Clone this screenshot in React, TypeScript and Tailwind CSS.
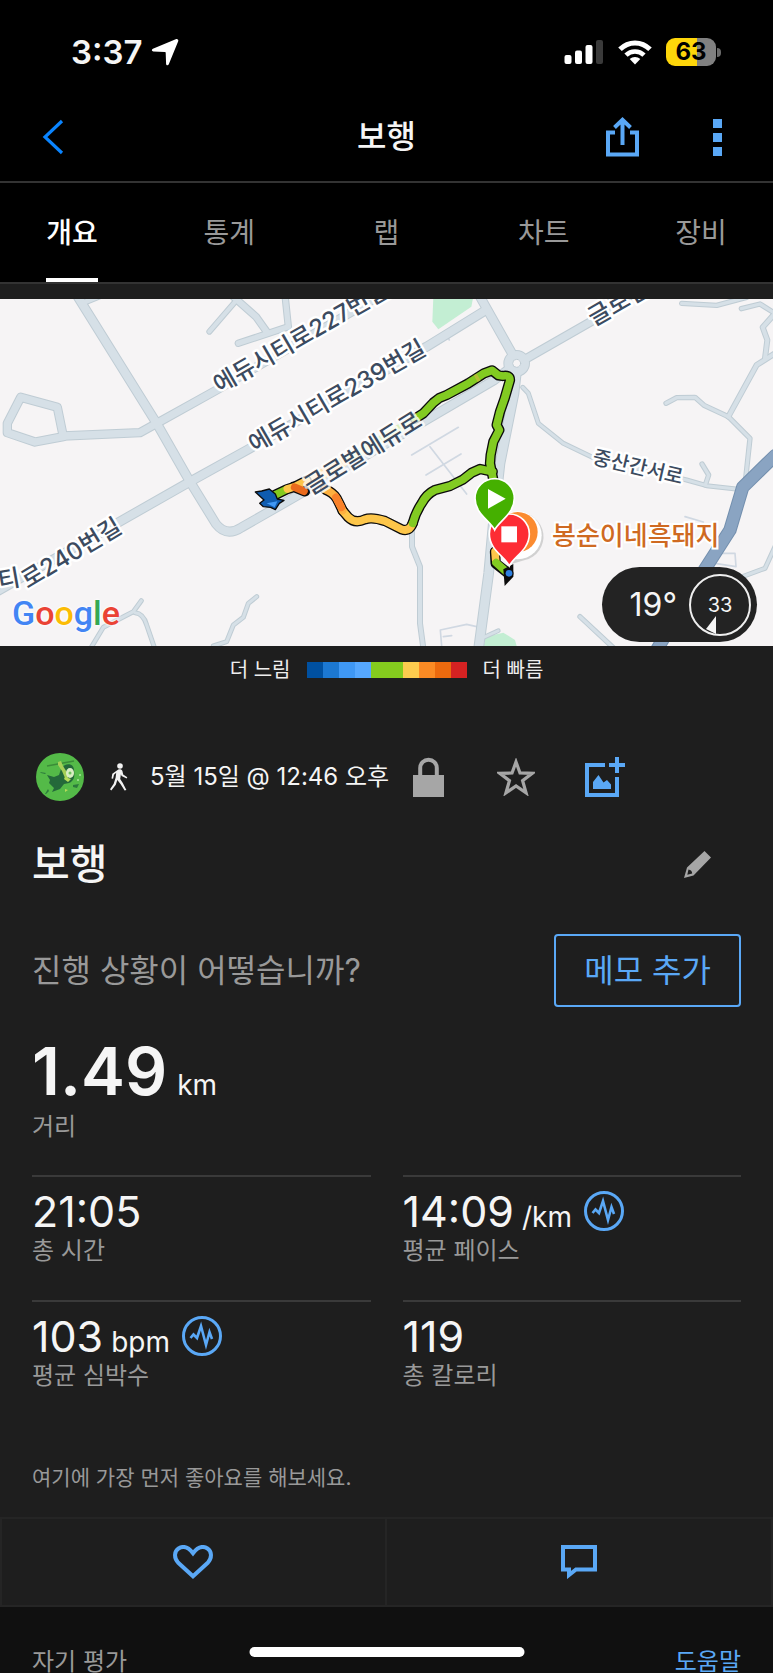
import React, { useState } from "react";

const TABS = ["개요", "통계", "랩", "차트", "장비"];

const PACE_COLORS = [
  "bg-[#0050a0]",
  "bg-[#1c78d2]",
  "bg-[#3f98f5]",
  "bg-[#56a8ff]",
  "bg-[#84cb1e]",
  "bg-[#84cb1e]",
  "bg-[#fccb4e]",
  "bg-[#fb8b24]",
  "bg-[#ec6a0e]",
  "bg-[#d62222]",
];

const STATS = [
  { value: "21:05", unit: "", label: "총 시간", chart: false },
  { value: "14:09", unit: "/km", label: "평균 페이스", chart: true },
  { value: "103", unit: "bpm", label: "평균 심박수", chart: true },
  { value: "119", unit: "", label: "총 칼로리", chart: false },
];

// Map geometry is drawn on a 3x grid and scaled down
const ROADS = [
  { d: "M230 15 L470 400 L570 575 L648 702 Q680 742 725 712 L900 612 L1480 272 L1550 220", w: 24 },
  { d: "M245 40 L300 18", w: 14 },
  { d: "M190 438 L420 428 L470 400 L650 300 L1160 5", w: 22 },
  { d: "M62 322 L172 352 L190 440 L105 456 L22 428 L22 400 Z", w: 22 },
  { d: "M-10 905 L570 575 L745 478 L1280 170 L1450 65", w: 24 },
  { d: "M628 125 L710 30", w: 12 },
  { d: "M715 160 L865 110 L855 15", w: 16 },
  { d: "M700 20 L768 80 L800 125", w: 18 },
  { d: "M1440 20 L1550 215", w: 24 },
  { d: "M1575 208 L1790 85 L1900 10", w: 22 },
  { d: "M1550 240 L1542 310 L1500 520 L1480 700 L1466 850 L1436 1075", w: 26 },
  { d: "M1568 292 L1585 310 L1615 400 L1690 460 L1780 503 L2060 570 L2120 587 L2215 598", w: 9 },
  { d: "M2106 522 L2126 555 L2116 585", w: 10 },
  { d: "M1998 340 L2030 323 L2085 322 L2112 346 L2185 380 L2250 445 L2236 575", w: 10 },
  { d: "M2185 380 L2270 225 L2325 190", w: 12 },
  { d: "M2295 205 L2302 150 L2288 112 L2325 70", w: 12 },
  { d: "M2045 40 L2150 46 L2240 22", w: 10 },
  { d: "M2224 56 L2280 42 L2325 70", w: 10 },
  { d: "M1236 725 L1236 770 L1260 830 L1260 1000 L1270 1075", w: 12 },
  { d: "M1740 980 L1842 1075", w: 10 },
  { d: "M1445 1045 L1495 1022", w: 8 },
  { d: "M2200 870 L2295 835 L2325 770", w: 9 },
  { d: "M272 1075 L310 1012 L400 965 L424 932", w: 9 },
  { d: "M405 968 Q430 970 440 1005 L464 1075", w: 9 },
  { d: "M640 1068 L680 1055 L700 1005 L730 982 L745 940 L770 920", w: 9 },
];

const LANES = [
  "M1235 495 L1375 412",
  "M1278 555 L1383 492",
  "M1290 470 L1400 612",
  "M1325 1068 L1321 1020 L1400 1003 L1430 1010",
  "M1330 1040 L1355 1037",
  "M2055 680 L2110 696",
  "M2160 790 L2205 790 L2208 830 L2145 820",
  "M1340 135 L1348 150",
];

const GREEN_LOOP =
  "M1480 570 L1470 520 L1472 495 L1480 455 L1498 420 L1490 405 L1500 365 L1514 325 L1530 270 Q1530 254 1508 258 L1495 256 L1476 241 L1452 250 L1405 280 L1340 315 L1318 324 L1300 338 L1270 370 L1245 386";
const GREEN_BACK = "M1478 545 L1440 537 L1415 548 L1390 568 L1350 588 L1305 600 Q1280 612 1265 640 Q1248 665 1238 700";
const YELLOW_PART = "M1238 700 Q1228 726 1205 718 L1155 693 Q1115 680 1095 688 Q1065 702 1045 682 L1028 662";
const ORANGE_PART = "M1028 662 Q1018 640 1010 625 Q1000 608 975 598";

function MapDrawing() {
  return (
    <svg
      viewBox="0 0 773 347"
      preserveAspectRatio="xMidYMid slice"
      className="block h-full w-full bg-[#f6f4f5]"
      role="img"
      aria-label="경로 지도"
    >
      <g transform="scale(0.333333) translate(0 -27)" fill="none" strokeLinejoin="round" strokeLinecap="round">
        <path d="M1300 20 H1420 L1414 50 L1315 118 L1297 95 Z" fill="#c3eed3" />
        <path d="M1450 1075 L1456 1040 L1510 1028 L1545 1050 L1552 1075 Z" fill="#c3eed3" />
        {LANES.map((d) => (
          <path key={d} d={d} stroke="#d0d8e2" strokeWidth={5} />
        ))}
        {ROADS.map((r) => (
          <path key={r.d} d={r.d} stroke="#bfccd4" strokeWidth={r.w + 6} />
        ))}
        <circle cx={1550} cy={220} r={25} stroke="#bfccd4" strokeWidth={30} />
        {ROADS.map((r) => (
          <path key={r.d} d={r.d} stroke="#d6e0e7" strokeWidth={r.w} />
        ))}
        <circle cx={1550} cy={220} r={24} stroke="#d6e0e7" strokeWidth={26} />
        <circle cx={1550} cy={220} r={12} fill="#f6f4f5" stroke="#bfccd4" strokeWidth={3} />
        <path d="M2325 497 L2228 592 L2190 720 L2110 845 L1970 1080" stroke="#738fae" strokeWidth={40} />
        <path d="M2325 497 L2228 592 L2190 720 L2110 845 L1970 1080" stroke="#8aa4c2" strokeWidth={34} />

        {/* Recorded track */}
        <path d="M1245 388 L1050 505" stroke="#dcefbd" strokeWidth={26} />
        <path d="M1030 515 L920 580" stroke="#fde3b4" strokeWidth={30} />
        <g stroke="#0b0b0b" strokeWidth={31}>
          <path d={GREEN_LOOP} />
          <path d={GREEN_BACK} />
          <path d={YELLOW_PART} />
          <path d={ORANGE_PART} />
          <path d="M825 615 L860 598 L885 590 L920 572 M880 590 L915 604" />
          <path d="M1485 785 L1487 820 L1525 850" />
        </g>
        <g strokeWidth={23}>
          <path d={YELLOW_PART} stroke="#fdc64a" />
          <path d={ORANGE_PART} stroke="#fdb040" />
          <path d="M1024 652 L1008 622" stroke="#f9812a" />
          <path d={GREEN_LOOP} stroke="#82cb22" />
          <path d={GREEN_BACK} stroke="#82cb22" />
          <path d="M1427 266 L1436 261" stroke="#b5bd35" strokeLinecap="butt" />
          <path d="M825 615 L860 598" stroke="#84cb1e" />
          <path d="M862 597 L885 590 L920 572" stroke="#fdc64a" />
          <path d="M884 592 L912 604" stroke="#ea6a1c" />
          <path d="M1485 785 L1487 810" stroke="#fdc64a" />
          <path d="M1488 818 L1520 846" stroke="#82cb22" />
        </g>
        <path d="M1510 838 L1540 822 V860 L1514 888 Z" fill="#0b0b0b" />
        <circle cx={1527} cy={850} r={10} fill="#2f80e0" />
        <path
          d="M766 606 L785 603 L808 597 L826 612 L832 627 L852 631 L838 640 L826 659 L812 652 L790 650 L779 640 L792 630 Z"
          fill="#0f5cb0"
          stroke="#0b0b0b"
          strokeWidth={4}
        />
        <path d="M800 640 L832 634 L824 652 Z" fill="#3f98f5" />
      </g>

      <g
        className="font-[Inter,'Noto_Sans_CJK_KR',sans-serif] text-[24px] font-medium"
        fill="#3c4b60"
        stroke="#ffffff"
        strokeWidth={5}
        strokeLinejoin="round"
        paintOrder="stroke"
        textAnchor="middle"
        dominantBaseline="central"
      >
        <text transform="translate(301 38) rotate(-30)">에듀시티로227번길</text>
        <text transform="translate(337 97) rotate(-30)">에듀시티로239번길</text>
        <text transform="translate(363 154) rotate(-32)" strokeOpacity={0.8}>글로벌에듀로</text>
        <text transform="translate(647 -13) rotate(-30)">글로벌에듀로</text>
        <text transform="translate(9 280) rotate(-10)">티</text>
        <text transform="translate(71 254) rotate(-31)">로240번길</text>
        <text transform="translate(638 168) rotate(13)" className="text-[20px]">중산간서로</text>
      </g>

      <g transform="scale(0.333333) translate(0 -27)">
        <path d="M1555 668 a72 72 0 0 1 20 142 L1535 822 Z" fill="#b9b9b9" opacity={0.6} />
        <circle cx={1553} cy={736} r={72} fill="#ffffff" />
        <circle cx={1553} cy={726} r={60} fill="#fb8b30" />
        <path
          d="M1528 828 C1515 800 1468 780 1468 732 a60 60 0 0 1 120 0 C1588 780 1541 800 1528 828 Z"
          fill="#fd2c34"
          stroke="#ffffff"
          strokeWidth={5}
        />
        <rect x={1504} y={709} width={47} height={48} fill="#ffffff" />
        <path
          d="M1484 720 C1472 694 1425 672 1425 625 a59 59 0 0 1 118 0 C1543 672 1496 694 1484 720 Z"
          fill="#45b000"
          stroke="#ffffff"
          strokeWidth={5}
        />
        <path d="M1464 597 L1517 626 L1464 656 Z" fill="#ffffff" />
      </g>
      <text
        x={552}
        y={246}
        className="font-['Noto_Sans_CJK_KR',sans-serif] text-[26px] font-medium"
        fill="#cf6a22"
        stroke="#ffffff"
        strokeWidth={4}
        paintOrder="stroke"
      >
        봉순이네흑돼지
      </text>
    </svg>
  );
}

function StatusBar() {
  return (
    <div className="flex h-[93px] items-center justify-between bg-black pt-[11px] pr-[52px] pl-[71px]">
      <div className="flex items-center gap-2">
        <span className="text-[33px] leading-none font-semibold">3:37</span>
        <svg viewBox="0 0 28 28" className="h-7 w-7" fill="#fff">
          <path d="M26.6 1.4c.8.4.9 1 .5 2L17.800 26.200c-.7 1.600-2.500 1.400-2.700-.3l-.4-10.800c0-.8-.3-1.100-1-1.100L2.300 13.500c-1.700-.1-2-1.900-.4-2.700L24.700 1.300c.8-.3 1.300-.3 1.900.1z" />
        </svg>
      </div>
      <div className="flex items-center">
        <svg viewBox="0 0 40 26" className="mr-[14px] h-[26px] w-10">
          <rect x="0.500" y="16" width="7" height="9" rx="2" fill="#fff" />
          <rect x="11" y="11.500" width="7" height="13.500" rx="2" fill="#fff" />
          <rect x="21.500" y="6" width="7" height="19" rx="2" fill="#fff" />
          <rect x="32" y="1" width="7" height="24" rx="2" fill="#3a3a3a" />
        </svg>
        <svg viewBox="0 0 34 26" className="mr-[14px] h-[26px] w-[34px]" fill="none" stroke="#fff" strokeWidth="5">
          <path d="M2 10.300C10.500 1.800 23.500 1.800 32 10.300" />
          <path d="M8 16.200c5-4.900 13-4.900 18 0" strokeWidth="4.600" />
          <path d="M17 25.400l-5.300-5.400c3-2.700 7.600-2.700 10.600 0z" fill="#fff" stroke="none" />
        </svg>
        <div className="flex items-center gap-px">
          <div className="flex h-7 w-[50px] items-center justify-center rounded-[9px] bg-linear-to-r from-[#fed60a] from-63% to-[#808080] to-63%">
            <span className="text-[24px] leading-none font-bold text-black">63</span>
          </div>
          <div className="h-[9px] w-1 rounded-r-full bg-[#6b6b6b]" />
        </div>
      </div>
    </div>
  );
}

function PulseIcon() {
  return (
    <svg viewBox="0 0 40 40" className="h-10 w-10" fill="none" stroke="#5aa8f6">
      <circle cx="20" cy="20" r="18.500" strokeWidth="3" />
      <path d="M8.500 22l3-3.500 3.500 3.500 4-12 5 19 3.500-13 2.500 7" strokeWidth="2.600" />
    </svg>
  );
}

function Avatar() {
  return (
    <svg viewBox="0 0 48 48" className="h-12 w-12">
      <circle cx="24" cy="24" r="24" fill="#54ba48" />
      <path d="M11 13l27-5" stroke="#3b8c38" strokeWidth="1.500" />
      <path d="M27 14c2-4 11-4 11 3 1 7 0 11-5 13l-5 1-4 5-8 3 2-4-5-5 1-3-3-5 7 2 5-2 2-6z" fill="#24693a" />
      <path d="M22 9l3-1 2 5 5 8 0 5-3-1-3-7-4-6z" fill="#a5cf57" />
      <path d="M4 19l6 1-1 1-4-1zM9 41l3-5 1 2-3 3zM37 32l6-1-2 4-4-1z" fill="#2c7a3c" />
      <ellipse cx="34" cy="20" rx="4" ry="5" fill="#d9eec2" />
      <path d="M29 24l6 2-3 3-4-3zM29 36l3 1-3 2z" fill="#b6dc5a" />
      <circle cx="34" cy="20" r="1.500" fill="#6dc25d" />
      <circle cx="44" cy="22" r="1" fill="#a9e29b" />
      <circle cx="42" cy="27" r="1" fill="#a9e29b" />
    </svg>
  );
}

export default function App() {
  const [tab, setTab] = useState("개요");

  return (
    <div className="relative min-h-screen overflow-hidden bg-[#1e1e1e] font-[Inter,'Noto_Sans_CJK_KR',sans-serif] text-[#f5f5f5]">
      <StatusBar />

      <header className="grid h-[90px] grid-cols-[1fr_auto_1fr] items-center border-b-2 border-[#333] bg-black px-[42px]">
        <button aria-label="뒤로" className="justify-self-start">
          <svg viewBox="0 0 22 36" className="h-9 w-[22px]" fill="none" stroke="#0a84ff" strokeWidth="3.200">
            <path d="M20 2L3 18l17 16" />
          </svg>
        </button>
        <h1 className="text-[32px] leading-10 font-medium">보행</h1>
        <div className="flex items-center gap-[74px] justify-self-end pr-[9px]">
          <button aria-label="공유">
            <svg viewBox="0 0 33 40" className="h-10 w-[33px]" fill="none" stroke="#5aa8f6" strokeWidth="4">
              <path d="M9 15.500H2V37.500H31V15.500H24M16.500 28V3M8.500 10.500L16.500 2.800L24.500 10.500" />
            </svg>
          </button>
          <button aria-label="더 보기" className="flex flex-col gap-[5px]">
            <span className="h-[9px] w-[9px] bg-[#5aa8f6]" />
            <span className="h-[9px] w-[9px] bg-[#5aa8f6]" />
            <span className="h-[9px] w-[9px] bg-[#5aa8f6]" />
          </button>
        </div>
      </header>

      <nav className="flex h-[101px] justify-between border-b-2 border-[#333] bg-black px-[46px]">
        {TABS.map((name) => (
          <button
            key={name}
            onClick={() => setTab(name)}
            className={`w-[52px] border-y-4 border-t-transparent text-[28px] leading-10 whitespace-nowrap ${
              tab === name ? "border-b-white font-medium text-white" : "border-b-transparent text-[#999]"
            }`}
          >
            {name}
          </button>
        ))}
      </nav>

      <main>
        <section className="relative mt-[15px] h-[347px]">
          <MapDrawing />
          <div className="absolute bottom-[13px] left-3 font-[Roboto,sans-serif] text-[34px] leading-10 font-medium [text-shadow:0_0_3px_#fff,0_0_3px_#fff]">
            <span className="text-[#4285f4]">G</span>
            <span className="text-[#ea4335]">o</span>
            <span className="text-[#fbbc05]">o</span>
            <span className="text-[#4285f4]">g</span>
            <span className="text-[#34a853]">l</span>
            <span className="text-[#ea4335]">e</span>
          </div>
          <div className="absolute right-4 bottom-1 flex h-[75px] w-[155px] items-center justify-end gap-3 rounded-full bg-[#232323] pr-[6px]">
            <span className="text-[32px] leading-none">19°</span>
            <div className="relative flex h-[62px] w-[62px] items-center justify-center rounded-full border-2 border-[#eee]">
              <span className="text-[20px] leading-none">33</span>
              <svg viewBox="0 0 10 18" className="absolute bottom-0 left-[15px] h-[18px] w-[10px]" fill="#f5f5f5">
                <path d="M0 13L10 0V18Z" />
              </svg>
            </div>
          </div>
        </section>

        <div className="flex items-center justify-center gap-4 pt-3 text-[20px] leading-6 text-[#eee]">
          <span>더 느림</span>
          <div className="flex h-4">
            {PACE_COLORS.map((c, i) => (
              <div key={i} className={`h-4 w-4 ${c}`} />
            ))}
          </div>
          <span>더 빠름</span>
        </div>

        <div className="px-8">
          <div className="mt-[71px] flex items-center pl-1">
            <Avatar />
            <svg viewBox="0 0 18 28" className="ml-[26px] h-7 w-[18px]" fill="#f2f2f2">
              <circle cx="10" cy="3" r="2.800" />
              <path d="M8.300 6.600c1.800-.6 3.600 0 4.100 1.500l.8 3.400 4.100 2.700-.7 1.400-5-2.500-.7-1.800-.7 4.600 2.600 4 3.600 7-1.800.7-4.100-6.500-3.200-4.200-1.500 4.900-4.500 5.700L0 26.300l3.700-5.500 1.900-6 .6-5-2.200 1.900-.9 4-1.600-.3.800-4.700z" />
            </svg>
            <time className="ml-[22px] text-[24px] leading-8 whitespace-nowrap">5월 15일 @ 12:46 오후</time>
            <button aria-label="비공개" className="ml-6">
              <svg viewBox="0 0 31 40" className="h-10 w-[31px]">
                <path d="M7.200 20V11a8.300 8.300 0 0 1 16.600 0v9" fill="none" stroke="#a6a6a6" strokeWidth="4" />
                <path d="M0 18h31v22H0z" fill="#a6a6a6" />
              </svg>
            </button>
            <button aria-label="즐겨찾기" className="ml-[53px]">
              <svg viewBox="0 0 38 38" className="h-[38px] w-[38px]" fill="none" stroke="#a6a6a6" strokeWidth="3">
                <path d="M19 5.500l3.700 10.200 11.300.4-8.900 6.700 3.200 11.300-9.300-6.400-9.300 6.400 3.200-11.300-8.900-6.700 11.300-.4z" transform="matrix(1.080 0 0 1.080 -1.500 -2)" />
              </svg>
            </button>
            <button aria-label="사진 추가" className="ml-[50px]">
              <svg viewBox="0 0 40 40" className="h-10 w-10">
                <path d="M20 8H2V38H32V20M32 0V16M24 8H40" fill="none" stroke="#5aa8f6" strokeWidth="4" />
                <path d="M8 32v-7l5.500-7 5 7.500 3.500-2.500 4 4.500v4.500z" fill="#5aa8f6" />
              </svg>
            </button>
          </div>

          <div className="mt-[39px] flex items-center justify-between pr-[30px]">
            <h2 className="text-[41px] leading-[48px] font-medium">보행</h2>
            <button aria-label="이름 편집">
              <svg viewBox="0 0 27 27" className="h-[27px] w-[27px]" fill="#a6a6a6">
                <path d="M20.500 0L27 6.500 9.500 24.500 0 27l3-10.500zM4.500 18.500L3.300 23.700l4.900-1.300c0-2-1.500-3.600-3.700-3.900z" fillRule="evenodd" />
              </svg>
            </button>
          </div>

          <div className="mt-[46px] flex items-center justify-between">
            <p className="text-[32px] leading-10 text-[#999]">진행 상황이 어떻습니까?</p>
            <button className="h-[73px] rounded-sm border-2 border-[#5aa8f6] px-7 text-[32px] leading-10 whitespace-nowrap text-[#5aa8f6]">
              메모 추가
            </button>
          </div>

          <div className="mt-8">
            <p className="flex h-16 items-baseline gap-[10px] leading-[64px]">
              <span className="text-[66px] font-semibold">1.49</span>
              <span className="text-[28px] leading-none">km</span>
            </p>
            <p className="mt-2 text-[24px] leading-8 text-[#999]">거리</p>
          </div>

          <div className="mt-8 grid grid-cols-2 gap-x-8 gap-y-[33px]">
            {STATS.map((s) => (
              <div key={s.label} className="border-t-2 border-[#3a3a3a] pt-[10px]">
                <div className="flex h-12 items-center gap-3">
                  <p className="flex items-baseline gap-2 leading-[48px]">
                    <span className="text-[43px]">{s.value}</span>
                    {s.unit && <span className="text-[28px] leading-none">{s.unit}</span>}
                  </p>
                  {s.chart && (
                    <button aria-label={`${s.label} 차트`}>
                      <PulseIcon />
                    </button>
                  )}
                </div>
                <p className="text-[24px] leading-8 text-[#999]">{s.label}</p>
              </div>
            ))}
          </div>

          <p className="mt-[70px] text-[21px] leading-8 text-[#999]">여기에 가장 먼저 좋아요를 해보세요.</p>
        </div>

        <div className="mt-[23px] grid h-[90px] grid-cols-2 divide-x-2 divide-[#252525] border-2 border-[#252525]">
          <button aria-label="좋아요" className="flex items-center justify-center">
            <svg viewBox="0 0 40 34" className="h-[34px] w-10" fill="none" stroke="#5aa8f6" strokeWidth="4">
              <path d="M20 31.200L5 17.500C.5 12.500 1.500 6 5.500 3.500c4.500-2.800 9.500-1.800 14.500 4.700 5-6.500 10-7.500 14.500-4.700 4 2.500 5 9 .5 14z" />
            </svg>
          </button>
          <button aria-label="댓글" className="flex items-center justify-center">
            <svg viewBox="0 0 36 34" className="h-[34px] w-9" fill="none" stroke="#5aa8f6" strokeWidth="4">
              <path d="M2 2H34V24.500H15L8 30V24.500H2Z" />
            </svg>
          </button>
        </div>
      </main>

      <footer className="flex justify-between bg-[#101010] px-8 pt-11 text-[24px] leading-[22px]">
        <span className="text-[#999]">자기 평가</span>
        <a href="#help" className="text-[#5aa8f6]">
          도움말
        </a>
      </footer>

      {/* Home indicator */}
      <div className="absolute bottom-4 left-1/2 h-[10px] w-[275px] -translate-x-1/2 rounded-full bg-white" />
    </div>
  );
}
